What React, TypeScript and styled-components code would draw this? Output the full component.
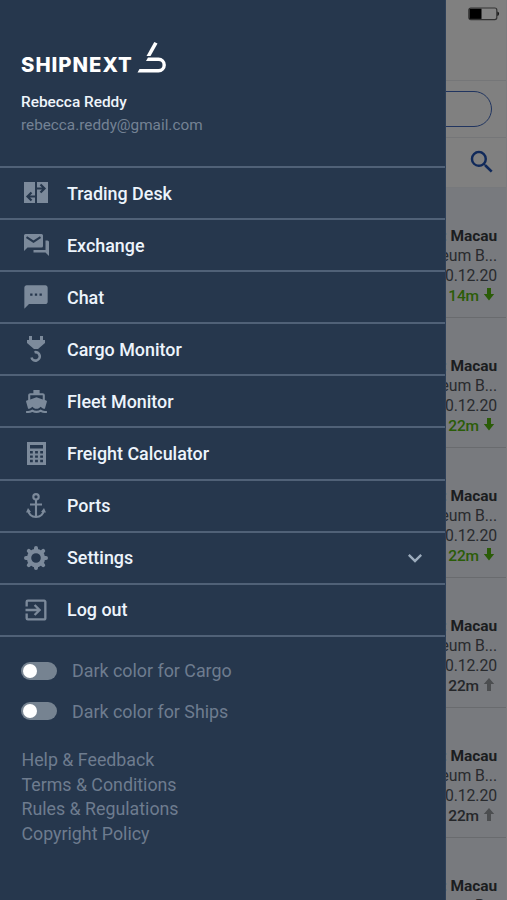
import React from "react";
import styled, { createGlobalStyle } from "styled-components";
import {
  MdSms, MdDirectionsBoat, MdExitToApp, MdSearch, MdKeyboardArrowDown,
} from "react-icons/md";

const GlobalStyle = createGlobalStyle`
  * { box-sizing: border-box; }
  body { margin: 0; background: #808080; font-family: Roboto, sans-serif; }
`;

const Screen = styled.div`
  position: relative;
  width: 507px;
  height: 900px;
  overflow: hidden;
  background: #808080;
`;

const Page = styled.main`
  height: 900px;
  display: flex;
  flex-direction: column;
  border-right: 1px solid #7b7c7e;
`;

const StatusBar = styled.div`
  height: 81px;
  flex: none;
  display: flex;
  justify-content: flex-end;
  padding: 6px 6px 0 0;
  border-bottom: 1px solid #757678;
`;

const FilterBar = styled.div`
  height: 57px;
  flex: none;
  display: flex;
  justify-content: flex-end;
  padding: 10px 14px 0 0;
  border-bottom: 1px solid #757678;
`;

const Pill = styled.div`
  width: 300px;
  height: 36px;
  border: 1px solid #213560;
  border-radius: 18px;
`;

const SearchBar = styled.div`
  height: 50px;
  flex: none;
  display: flex;
  justify-content: flex-end;
  padding: 9px 9px 0 0;
  color: #10295a;
  border-bottom: 1px solid #77797c;
`;

const Listing = styled.article`
  height: 130px;
  flex: none;
  display: flex;
  flex-direction: column;
  align-items: flex-end;
  padding: 37.5px 9px 0 0;
  background: #787a7e;
  border-bottom: 1px solid #696b6e;
  color: #292b2e;
  font-size: 15.8px;
  line-height: 20px;
  letter-spacing: -0.1px;
  white-space: nowrap;
`;

const Route = styled.div`
  font-size: 15.5px;
  font-weight: 700;
  color: #1b1d20;
`;

const Age = styled.div<{ $fresh: boolean }>`
  display: flex;
  align-items: center;
  gap: 4px;
  padding-right: 2px;
  font-size: 15.5px;
  font-weight: 500;
  color: ${(p) => (p.$fresh ? "#2b5c08" : "#25272a")};
  svg { fill: ${(p) => (p.$fresh ? "#2b5c08" : "#4c4e50")}; margin-top: -2px; }
`;

const Drawer = styled.aside`
  position: absolute;
  left: 0;
  top: 0;
  width: 446px;
  height: 900px;
  background: #26374d;
  border-right: 1px solid #2d4059;
`;

const Profile = styled.header`
  height: 166px;
  padding: 42px 0 0 21px;
`;

const Brand = styled.div`
  display: flex;
  height: 32px;
  color: #fff;
`;

const BrandName = styled.span`
  width: 116px;
  padding-top: 10px;
  font: 800 20.3px/26px Inter, sans-serif;
  letter-spacing: 1px;
`;

const UserName = styled.div`
  margin-top: 18px;
  font-size: 15.4px;
  line-height: 20px;
  font-weight: 500;
  color: #eef4fb;
`;

const Email = styled.div`
  margin-top: 3px;
  font-size: 15.3px;
  line-height: 20px;
  color: #748294;
`;

const Menu = styled.nav`
  border-top: 2px solid #506177;
`;

const MenuItem = styled.a`
  height: 52.1px;
  display: flex;
  align-items: center;
  padding: 0 16px 0 22px;
  border-bottom: 2px solid #506177;
  color: #edf4fc;
  font-size: 17.9px;
  font-weight: 500;
`;

const IconSlot = styled.span`
  width: 28px;
  height: 28px;
  margin-right: 17px;
  display: grid;
  place-items: center;
  color: #7c8a9b;
`;

const Expand = styled.span`
  margin-left: auto;
  display: flex;
  color: #9dacbd;
`;

const Toggles = styled.div`
  padding: 13.500px 0 0 21px;
`;

const ToggleRow = styled.label`
  height: 40.5px;
  display: flex;
  align-items: center;
  gap: 15px;
  font-size: 17.85px;
  color: #6e7c8f;
`;

const Track = styled.span`
  width: 36px;
  height: 18px;
  padding: 2px;
  border-radius: 9px;
  background: #768391;
`;

const Knob = styled.span`
  display: block;
  width: 14px;
  height: 14px;
  border-radius: 50%;
  background: #fff;
`;

const Links = styled.div`
  display: flex;
  flex-direction: column;
  padding: 16.5px 0 0 21.500px;
  font-size: 17.8px;
  line-height: 24.8px;
  color: #6e7c8f;
`;

const Battery = () => (
  <svg width="33" height="16" viewBox="0 0 33 16">
    <rect x="1.8" y="2" width="28" height="11.6" rx="2" fill="#858585" stroke="#333" strokeWidth="1.2" />
    <rect x="2.5" y="2.7" width="12" height="10.2" fill="#000" />
    <path d="M30.4 5.6a2.3 2.3 0 0 1 0 4.4z" fill="#111" />
  </svg>
);

const LogoMark = () => (
  <svg width="30" height="32" viewBox="0 0 30 32" fill="#fff">
    <path d="M17.300 0 20.500 1.500 13.500 14H9.500z" />
    <path d="M11 15.600H21.500a7.100 7.100 0 0 1 0 14.800H.5L2.500 27H21.500a3.900 3.900 0 0 0 0-8H9z" />
  </svg>
);

const TradingIcon = () => (
  <svg width="24" height="22" viewBox="0 0 24 22">
    <path d="M0 0H11V21H0zM13 0H24V21H13z" fill="currentColor" />
    <path d="M12 6.5H20M16.5 2.5l4 4-4 4M12 14.5H4M7.5 10.5l-4 4 4 4" fill="none" stroke="#26374d" strokeWidth="2.2" />
  </svg>
);

const ExchangeIcon = () => (
  <svg width="25" height="22" viewBox="0 0 25 22" fill="currentColor">
    <path d="M1.5 0H17.5Q19 0 19 1.5V12Q19 13.5 17.5 13.5H3.5L0 17V1.5Q0 0 1.5 0z" />
    <path d="M21.500 6.500h2Q25 6.500 25 8v14l-3.500-3.500H9.500V16H21.500z" />
    <path d="m2.500 3.200 7 4.500 7-4.500" fill="none" stroke="#26374d" strokeWidth="2" />
  </svg>
);

const HookIcon = () => (
  <svg width="20" height="26" viewBox="0 0 20 26">
    <path d="M3 0h3v4h8V0h3v4h2v3l-7 6H8L1 7V4h2z" fill="currentColor" />
    <path d="M8.500 16.300a4.200 4.200 0 1 1-3 5.200" fill="none" stroke="currentColor" strokeWidth="2.6" />
  </svg>
);

const CalculatorIcon = () => (
  <svg width="19" height="23" viewBox="0 0 19 23">
    <path d="M0 0H19V23H0z" fill="currentColor" />
    <path d="M3 3H16V6.5H3zM3 9h2.8v2.4H3zM8.1 9h2.8v2.4H8.1zM13.2 9H16v2.4h-2.8zM3 13.4h2.8v2.4H3zM8.1 13.4h2.8v2.4H8.1zM13.2 13.4H16v2.4h-2.8zM3 17.8h2.8v2.4H3zM8.1 17.8h2.8v2.4H8.1zM13.2 17.8H16v2.4h-2.8z" fill="#26374d" />
  </svg>
);

const AnchorIcon = () => (
  <svg width="20" height="26" viewBox="0 0 20 26" fill="none" stroke="currentColor" strokeWidth="2.1">
    <circle cx="10" cy="3.8" r="2.7" />
    <path d="M10 6.5V24M4 11.5H16M2 17c.5 4 3.5 7 8 7s7.5-3 8-7" />
    <path d="M0 19.5 2 15l3 4zM20 19.5 18 15l-3 4z" fill="currentColor" stroke="none" />
  </svg>
);

const GearIcon = () => (
  <svg width="24" height="24" viewBox="-12 -12 24 24" fill="none" stroke="currentColor">
    <circle r="7" strokeWidth="4.4" />
    <path d="M0-8V-10M0 8V10M-8 0H-10M8 0H10M5.700-5.700 7.200-7.200M-5.700 5.700-7.200 7.200M5.700 5.700 7.200 7.200M-5.700-5.700-7.200-7.200" strokeWidth="4" strokeLinecap="round" />
  </svg>
);

const AgeArrow = ({ up }: { up: boolean }) => (
  <svg width="12" height="13" viewBox="0 0 12 13">
    <path d={up ? "M4 13V6H.8L6 0l5.200 6H8v7z" : "M4 0v6H.8L6 12.500 11.200 6H8V0z"} />
  </svg>
);

const menu = [
  { label: "Trading Desk", icon: <TradingIcon /> },
  { label: "Exchange", icon: <ExchangeIcon /> },
  { label: "Chat", icon: <MdSms size={28} /> },
  { label: "Cargo Monitor", icon: <HookIcon /> },
  { label: "Fleet Monitor", icon: <MdDirectionsBoat size={25} /> },
  { label: "Freight Calculator", icon: <CalculatorIcon /> },
  { label: "Ports", icon: <AnchorIcon /> },
  { label: "Settings", icon: <GearIcon />, expandable: true },
  { label: "Log out", icon: <MdExitToApp size={28} /> },
];

const listings = [
  { age: "14m", up: false },
  { age: "22m", up: false },
  { age: "22m", up: false },
  { age: "22m", up: true },
  { age: "22m", up: true },
  { age: "22m", up: true },
];

export default function App() {
  return (
    <Screen>
      <GlobalStyle />
      <Page>
        <StatusBar><Battery /></StatusBar>
        <FilterBar><Pill /></FilterBar>
        <SearchBar><MdSearch size={30} /></SearchBar>
        {listings.map((l, i) => (
          <Listing key={i}>
            <Route>: Macau</Route>
            <div>Petroleum B...</div>
            <div>10.12.20</div>
            <Age $fresh={!l.up}>{l.age}<AgeArrow up={l.up} /></Age>
          </Listing>
        ))}
      </Page>
      <Drawer>
        <Profile>
          <Brand><BrandName>SHIPNEXT</BrandName><LogoMark /></Brand>
          <UserName>Rebecca Reddy</UserName>
          <Email>rebecca.reddy@gmail.com</Email>
        </Profile>
        <Menu>
          {menu.map((m) => (
            <MenuItem key={m.label}>
              <IconSlot>{m.icon}</IconSlot>
              {m.label}
              {m.expandable && <Expand><MdKeyboardArrowDown size={28} /></Expand>}
            </MenuItem>
          ))}
        </Menu>
        <Toggles>
          <ToggleRow><Track><Knob /></Track>Dark color for Cargo</ToggleRow>
          <ToggleRow><Track><Knob /></Track>Dark color for Ships</ToggleRow>
        </Toggles>
        <Links>
          <span>Help &amp; Feedback</span>
          <span>Terms &amp; Conditions</span>
          <span>Rules &amp; Regulations</span>
          <span>Copyright Policy</span>
        </Links>
      </Drawer>
    </Screen>
  );
}
